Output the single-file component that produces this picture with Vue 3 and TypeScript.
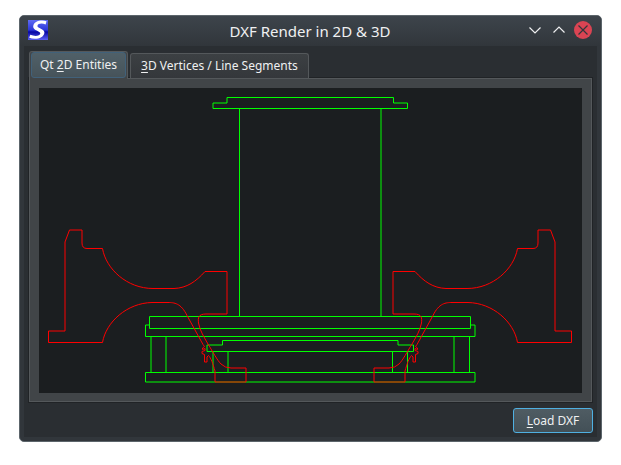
<script setup lang="ts">
import { ref } from 'vue'

interface Tab {
  before: string
  key: string
  after: string
}

const tabs: Tab[] = [
  { before: 'Qt ', key: '2', after: 'D Entities' },
  { before: '', key: '3', after: 'D Vertices / Line Segments' },
]
const active = ref(0)

// Frame profiles: column, cap, table top, inner shelf, legs and plinth
const frame: string[] = [
  'M213 108.5V103H227V97.5H393.5V103H407.5V108.5Z',
  'M239.5 108.5V316.5M381 108.5V316.5',
  'M149.5 316.5H470.5V328.5H149.5Z',
  'M149.5 325H145.5V336.5H475V325H470.5',
  'M151 336.5V372.5M166 336.5V372.5M454 336.5V372.5M469.5 336.5V372.5',
  'M145.5 372.5H475V382H145.5Z',
  'M207 351.5V345H222.5V340.5H398V345H413.5V351.5Z',
  'M213 351.5V372.5M228 351.5V372.5M392.5 351.5V372.5M407.5 351.5V372.5',
]

// One bracket; the other is its mirror image
const bracket =
  'M48.5 331H65V242L69.5 230H82V243Q82 248.5 87 248.5H102.5' +
  'C106 269 127 288.5 153 288.5H174C187 288 196 281.5 205 271.5H227V314H206' +
  'C198 314 198 318 198.5 323C200 331 204 337 208 344C213 352 217 360 221 364' +
  'Q225 368 231 368H246V382H215V371C213 364 211 358 208.5 355.5L207 357V362H204.5V354.5' +
  'L202 353.5V351.5L205 350.5V348.5L202.5 349.5V348L204.5 346.5L203 344.5L187 315.5' +
  'C181 303 174 302.5 168 302.5H152C127 303 106 322 102.5 342.5H48.5Z'
</script>

<template>
  <div class="desktop">
    <main class="window">
      <header class="titlebar">
        <svg class="logo" viewBox="0 0 20 20" aria-hidden="true">
          <defs>
            <linearGradient id="logo-fill" x1="0" y1="0" x2="0" y2="1">
              <stop offset="0" stop-color="#5f6cf4" />
              <stop offset="0.5" stop-color="#2c36d8" />
              <stop offset="0.6" stop-color="#0606a4" />
              <stop offset="1" stop-color="#5a5ef2" />
            </linearGradient>
          </defs>
          <rect width="20" height="20" fill="url(#logo-fill)" />
          <path
            d="M18.5 1.2L17.6 4.4C14 3 9.8 3.4 9.4 5.9C9.2 8.3 16.8 8.8 16.4 12.8C15.8 18.3 7.5 20.2 1.2 17.8L2.3 14.8C6.5 16.7 12 16.2 12.3 13.6C12.5 10.9 5 10.6 5.2 6.6C5.6 1.3 12.6-0.4 18.5 1.2Z"
            fill="#fff"
          />
        </svg>
        <h1>DXF Render in 2D &amp; 3D</h1>
        <div class="controls">
          <button type="button" aria-label="Minimize">
            <svg viewBox="0 0 18 18"><path d="M3.5 6.5L9 12L14.5 6.5" /></svg>
          </button>
          <button type="button" aria-label="Maximize">
            <svg viewBox="0 0 18 18"><path d="M3.5 11.5L9 6L14.5 11.5" /></svg>
          </button>
          <button type="button" class="close" aria-label="Close">
            <svg viewBox="0 0 18 18">
              <circle cx="9" cy="9" r="9" />
              <path d="M4.5 4.5L13.5 13.5M13.5 4.5L4.5 13.5" />
            </svg>
          </button>
        </div>
      </header>

      <div class="content">
        <div class="tabs" role="tablist">
          <button
            v-for="(tab, i) in tabs"
            :key="i"
            type="button"
            role="tab"
            class="tab"
            :class="{ active: active === i }"
            :aria-selected="active === i"
            @click="active = i"
          ><span>{{ tab.before }}<u>{{ tab.key }}</u>{{ tab.after }}</span></button>
        </div>

        <section class="pane" role="tabpanel">
          <div class="canvas">
            <svg v-if="active === 0" viewBox="39 88 543 305" aria-hidden="true">
              <g class="green">
                <path v-for="d in frame" :key="d" :d="d" />
              </g>
              <g class="red">
                <path :d="bracket" />
                <path :d="bracket" transform="translate(620 0) scale(-1 1)" />
              </g>
            </svg>
          </div>
        </section>

        <footer class="actions">
          <button type="button" class="load"><span><u>L</u>oad DXF</span></button>
        </footer>
      </div>
    </main>
  </div>
</template>

<style>
body {
  margin: 0;
  background: #fff;
}
</style>

<style scoped>
.desktop,
.desktop * {
  box-sizing: border-box;
}

.desktop {
  display: flex;
  min-height: 100vh;
  padding: 15px 19px 23px;
  font-family: 'Noto Sans', sans-serif;
  font-size: 12px;
  color: #eff0f1;
}

button {
  padding: 0;
  border: 0;
  background: none;
  color: inherit;
  font: inherit;
}

u {
  text-decoration-thickness: 1px;
  text-underline-offset: 2px;
}

.window {
  display: flex;
  flex: 1;
  flex-direction: column;
  min-width: 0;
  padding: 0 4px 4px;
  border: 1px solid #5c656b;
  border-radius: 5px;
  background: #31363b;
}

.titlebar {
  display: grid;
  grid-template-columns: 1fr auto 1fr;
  align-items: start;
  height: 30px;
  margin: 0 -4px;
  padding: 4px 9px 0 8px;
  border-radius: 4px 4px 0 0;
  background: linear-gradient(#3d444b, #31363b);
}

.logo {
  width: 20px;
  height: 20px;
}

h1 {
  margin: 0;
  font-size: 15px;
  font-weight: 400;
  line-height: 22px;
}

.controls {
  display: flex;
  justify-content: flex-end;
  gap: 6px;
  padding-top: 1px;
}

.controls button {
  width: 18px;
  height: 18px;
}

.controls svg {
  display: block;
  width: 18px;
  height: 18px;
}

.controls path {
  fill: none;
  stroke: #eff0f1;
  stroke-width: 1.2;
}

.controls circle {
  fill: #da4453;
}

.controls .close path {
  stroke: #31363b;
}

.content {
  display: flex;
  flex: 1;
  flex-direction: column;
  padding: 5px 4px 4px 5px;
  background: #2a2e32;
}

.tabs {
  position: relative;
  display: flex;
  align-items: flex-end;
  gap: 2px;
}

.tab {
  height: 25px;
  padding: 0 10px;
  border: 1px solid #54585b;
  border-bottom: 0;
  border-radius: 3px 3px 0 0;
  background: linear-gradient(#3c4043, #34373b);
  line-height: 24px;
}

.tab.active {
  height: 28px;
  margin-bottom: -1px;
  padding: 0 1px 1px;
  background: #414548;
  line-height: 24px;
}

.tab.active span {
  display: block;
  padding: 0 8px;
  border: 1px solid #41617a;
  border-radius: 3px;
  background: linear-gradient(#506068, #46535a);
}

.pane {
  display: flex;
  flex: 1;
  margin-right: 1px;
  padding: 9px 9px 8px;
  border: 1px solid #54585b;
  background: #414548;
  box-shadow: 0 0 0 1px #202326;
}

.canvas {
  flex: 1;
  min-width: 0;
  background: #1b1e20;
}

.canvas svg {
  display: block;
  width: 100%;
  height: 100%;
}

.canvas path {
  fill: none;
  stroke-width: 1;
}

.green path {
  stroke: #00ff00;
}

.red path {
  stroke: #ff0000;
}

.actions {
  display: flex;
  justify-content: flex-end;
  padding-top: 6px;
}

.load {
  width: 80px;
  height: 25px;
  border: 1px solid #4fb0e2;
  border-radius: 3px;
  background: linear-gradient(#4f5c63, #435057);
  line-height: 23px;
}
</style>
